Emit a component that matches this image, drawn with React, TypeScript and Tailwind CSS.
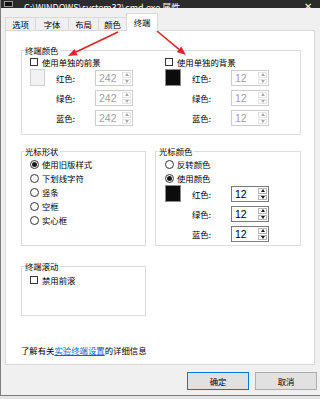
import React from 'react';

const FONT = "font-['Noto_Sans_CJK_SC','Noto_Sans',sans-serif]";

function Checkbox() {
  return <span className="block h-[8px] w-[8px] shrink-0 border border-[#333333] bg-white" />;
}

function Radio({ checked }: { checked?: boolean }) {
  return (
    <span className="flex h-[9px] w-[9px] shrink-0 items-center justify-center rounded-full border border-[#333333] bg-white">
      {checked && <span className="h-[5px] w-[5px] rounded-full bg-[#1a1a1a]" />}
    </span>
  );
}

function Spin({ value, disabled }: { value: string; disabled?: boolean }) {
  const edge = disabled ? 'border-[#cccccc]' : 'border-[#7a7a7a]';
  const arrow = disabled ? 'border-b-[#a8a8a8]' : 'border-b-[#1a1a1a]';
  const arrowDown = disabled ? 'border-t-[#a8a8a8]' : 'border-t-[#1a1a1a]';
  return (
    <div className={`flex h-[16px] w-[38px] border bg-white ${edge}`}>
      <span
        className={`flex-1 pl-[3px] font-['Liberation_Sans',sans-serif] text-[10.5px] leading-[14px] ${
          disabled ? 'text-[#a0a0a0]' : 'text-black'
        }`}
      >
        {value}
      </span>
      <div className="flex w-[10px] flex-col gap-[1px] py-[1px] pr-[1px]">
        <div className={`flex flex-1 items-center justify-center border ${disabled ? 'border-[#e4e4e4]' : 'border-[#b5b5b5]'}`}>
          <span className={`h-0 w-0 border-x-[2.5px] border-b-[3px] border-x-transparent ${arrow}`} />
        </div>
        <div className={`flex flex-1 items-center justify-center border ${disabled ? 'border-[#e4e4e4]' : 'border-[#b5b5b5]'}`}>
          <span className={`h-0 w-0 border-x-[2.5px] border-t-[3px] border-x-transparent ${arrowDown}`} />
        </div>
      </div>
    </div>
  );
}

function RgbRows({ value, disabled }: { value: string; disabled?: boolean }) {
  return (
    <div className="ml-[11px] mt-[1px] flex flex-col gap-[4px]">
      {['红色:', '绿色:', '蓝色:'].map((l) => (
        <div key={l} className="flex h-[16px] items-center">
          <span className="w-[39px] leading-[14px]">{l}</span>
          <Spin value={value} disabled={disabled} />
        </div>
      ))}
    </div>
  );
}

function Group({ title, className, children }: { title: string; className: string; children?: React.ReactNode }) {
  return (
    <div className={`relative border border-[#dcdcdc] ${className}`}>
      <span className="absolute left-[2px] top-[-6px] bg-white px-[1px] leading-[10px]">{title}</span>
      {children}
    </div>
  );
}

export default function App() {
  const tabs = [
    { label: '选项', w: 'w-[31px]' },
    { label: '字体', w: 'w-[34px]' },
    { label: '布局', w: 'w-[31px]' },
    { label: '颜色', w: 'w-[29px]' },
  ];

  return (
    <div className={`relative h-[399px] w-[320px] overflow-hidden bg-[#e4e4e4] text-[8.4px] text-black ${FONT}`}>
      <div className="h-[396px] border-b border-l border-[#7d7d7d] bg-[#f0f0f0]">
        {/* title bar, scrolled mostly off the top */}
        <div className="relative flex h-[8px] items-end overflow-hidden bg-[#2b2b2b] text-white">
          <span className="mb-[1px] ml-[3px] h-[6px] w-[9px] border border-[#9a9a9a] bg-[#111]" />
          <span className="mb-[-5px] ml-[11px] text-[9px] leading-[10px]">C:\WINDOWS\system32\cmd.exe 属性</span>
          <span className="absolute bottom-[-3px] right-[8px] text-[10px] leading-[10px]">✕</span>
        </div>

        {/* tabs */}
        <div className="relative z-10 mb-[-1px] ml-[4px] mt-[5px] flex h-[18px] items-end">
          {tabs.map((t, i) => (
            <div
              key={t.label}
              className={`flex h-[14px] items-center justify-center border border-[#d9d9d9] bg-[#f0f0f0] ${t.w} ${i > 0 ? '-ml-px' : ''}`}
            >
              {t.label}
            </div>
          ))}
          <div className="-ml-px flex h-[18px] w-[32px] items-center justify-center border border-b-0 border-[#d9d9d9] bg-white">
            终端
          </div>
        </div>

        {/* tab page */}
        <div className="ml-[4px] h-[335px] w-[310px] border border-[#d9d9d9] bg-white pl-[15px] pt-[19px]">
          <Group title="终端颜色" className="h-[85px] w-[280px]">
            <div className="flex pl-[8px] pt-[7px]">
              <div className="w-[135px]">
                <div className="flex h-[8px] items-center gap-[4px]">
                  <Checkbox />
                  <span className="leading-[10px]">使用单独的前景</span>
                </div>
                <div className="mt-[3px] flex">
                  <div className="h-[17px] w-[15px] border border-[#cfcfcf] bg-[#f2f2f2]" />
                  <RgbRows value="242" disabled />
                </div>
              </div>
              <div>
                <div className="flex h-[8px] items-center gap-[4px]">
                  <Checkbox />
                  <span className="leading-[10px]">使用单独的背景</span>
                </div>
                <div className="mt-[3px] flex">
                  <div className="h-[17px] w-[16px] border border-[#8a8a8a] bg-[#0c0c0c]" />
                  <RgbRows value="12" disabled />
                </div>
              </div>
            </div>
          </Group>

          <div className="mt-[16px] flex gap-[9px]">
            <Group title="光标形状" className="h-[95px] w-[125px]">
              <div className="pl-[8px] pt-[5px]">
                {['使用旧版样式', '下划线字符', '竖条', '空框', '实心框'].map((s, i) => (
                  <div key={s} className="flex h-[14px] items-center gap-[3px]">
                    <Radio checked={i === 0} />
                    <span>{s}</span>
                  </div>
                ))}
              </div>
            </Group>
            <Group title="光标颜色" className="h-[95px] w-[146px]">
              <div className="pl-[9px] pt-[5px]">
                <div className="flex h-[14px] items-center gap-[3px]">
                  <Radio />
                  <span>反转颜色</span>
                </div>
                <div className="flex h-[14px] items-center gap-[3px]">
                  <Radio checked />
                  <span>使用颜色</span>
                </div>
                <div className="flex">
                  <div className="h-[17px] w-[16px] border border-[#8a8a8a] bg-[#0c0c0c]" />
                  <RgbRows value="12" />
                </div>
              </div>
            </Group>
          </div>

          <Group title="终端滚动" className="mt-[20px] h-[50px] w-[125px]">
            <div className="mt-[9px] flex h-[8px] items-center gap-[4px] pl-[8px]">
              <Checkbox />
              <span className="leading-[10px]">禁用前滚</span>
            </div>
          </Group>

          <p className="mt-[29px] leading-[10px]">
            了解有关<span className="text-[#0066cc] underline">实验终端设置</span>的详细信息
          </p>
        </div>

        {/* buttons */}
        <div className="mt-[7px] flex justify-end gap-[6px] pr-[3px]">
          <button className="h-[18px] w-[62px] border border-[#0078d7] bg-[#e1e1e1] leading-[14px]">确定</button>
          <button className="h-[18px] w-[62px] border border-[#adadad] bg-[#e1e1e1] leading-[14px]">取消</button>
        </div>
      </div>

      {/* red annotation arrows */}
      <svg className="pointer-events-none absolute left-0 top-0" width="320" height="399" viewBox="0 0 320 399">
        <line x1="118" y1="32" x2="76" y2="52" stroke="#e3202a" strokeWidth="1.6" />
        <polygon points="68,56 77.6,55.3 74.6,49" fill="#e3202a" />
        <line x1="157" y1="31" x2="179" y2="49.3" stroke="#e3202a" strokeWidth="1.6" />
        <polygon points="186,55 176.8,52 181.3,46.6" fill="#e3202a" />
      </svg>
    </div>
  );
}
